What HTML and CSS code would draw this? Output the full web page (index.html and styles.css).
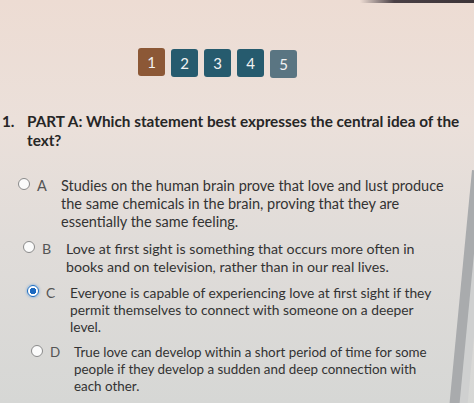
FILE: index.html
```html
<!DOCTYPE html>
<html lang="en">
<head>
<meta charset="utf-8">
<title>Question 1</title>
<link rel="stylesheet" href="styles.css">
</head>
<body>
<div class="screen">
  <div class="topband"></div>
  <nav class="pager">
    <span class="page current">1</span>
    <span class="page">2</span>
    <span class="page">3</span>
    <span class="page">4</span>
    <span class="page muted">5</span>
  </nav>
  <div class="question">
    <span class="qnum">1.</span>
    <span class="qtext">PART A: Which statement best expresses the central idea of the text?</span>
  </div>
  <ul class="options">
    <li class="option opt-a"><span class="radio"></span><span class="letter">A</span><span class="otext">Studies on the human brain prove that love and lust produce the same chemicals in the brain, proving that they are essentially the same feeling.</span></li>
    <li class="option opt-b"><span class="radio"></span><span class="letter">B</span><span class="otext">Love at first sight is something that occurs more often in books and on television, rather than in our real lives.</span></li>
    <li class="option opt-c"><span class="radio checked"></span><span class="letter">C</span><span class="otext">Everyone is capable of experiencing love at first sight if they permit themselves to connect with someone on a deeper level.</span></li>
    <li class="option opt-d"><span class="radio"></span><span class="letter">D</span><span class="otext">True love can develop within a short period of time for some people if they develop a sudden and deep connection with each other.</span></li>
  </ul>
  <div class="scrollbar"></div>
</div>
</body>
</html>
```

FILE: styles.css
```css
* { box-sizing: border-box; }
html, body { margin: 0; padding: 0; }
body {
  width: 474px;
  height: 403px;
  overflow: hidden;
  font-family: Lato, "Open Sans", sans-serif;
  color: #2e2e2e;
}
.screen {
  position: relative;
  width: 474px;
  height: 403px;
  background: linear-gradient(180deg, #eddcd3 0%, #ebe0da 30%, #e0dcd9 60%, #d6d7d5 100%);
  overflow: hidden;
}
.topband {
  position: absolute;
  top: 0;
  left: 360px;
  right: 0;
  height: 3px;
  background: linear-gradient(90deg, rgba(60,50,55,0) 0%, #4a4046 30%, #3c3438 100%);
}
.pager {
  display: flex;
  gap: 6px;
  padding: 48px 0 0 138px;
}
.page {
  width: 27px;
  height: 28px;
  border-radius: 3px;
  background: #265b6e;
  color: #f2f2f2;
  font-size: 15px;
  display: flex;
  align-items: center;
  justify-content: center;
  margin-top: 1px;
}
.page.current { background: #8c5836; margin-top: 0; }
.page.muted { background: #5a7582; margin-top: 2px; }
.question {
  display: flex;
  margin-top: 34px;
  padding-left: 2px;
  font-weight: 700;
  font-size: 15.3px;
  line-height: 19px;
  color: #262626;
}
.qnum { width: 25px; flex: none; }
.qtext { width: 445px; flex: none; }
.options {
  list-style: none;
  margin: 27px 0 0;
  padding: 0;
}
.option {
  display: flex;
  align-items: flex-start;
  margin-bottom: 9px;
  line-height: 1.24;
}
.opt-a { margin-left: 18px; font-size: 14.5px; }
.opt-b { margin-left: 23px; font-size: 14.2px; }
.opt-c { margin-left: 27px; font-size: 13.8px; }
.opt-d { margin-left: 31px; font-size: 13.4px; }
.radio {
  flex: none;
  width: 12px;
  height: 12px;
  margin-top: 1px;
  margin-right: 7px;
  border-radius: 50%;
  border: 1.5px solid #8a8a8a;
  background: #fbfbfb;
}
.radio.checked {
  border: 1.5px solid #1f6fc4;
  background: radial-gradient(circle, #1c69c0 0 3px, #fff 3.5px);
  box-shadow: 0 0 2px 1px rgba(60,140,220,0.35);
}
.letter {
  flex: none;
  width: 24px;
  color: #555;
}
.otext {
  flex: none;
  width: 26.8em;
  color: #333;
}
.scrollbar {
  position: absolute;
  top: 170px;
  left: 472px;
  width: 10px;
  height: 300px;
  background: #a9abad;
  transform-origin: top left;
  transform: rotate(5.5deg);
  box-shadow: 8px 0 0 #cfd0d0;
}
```
